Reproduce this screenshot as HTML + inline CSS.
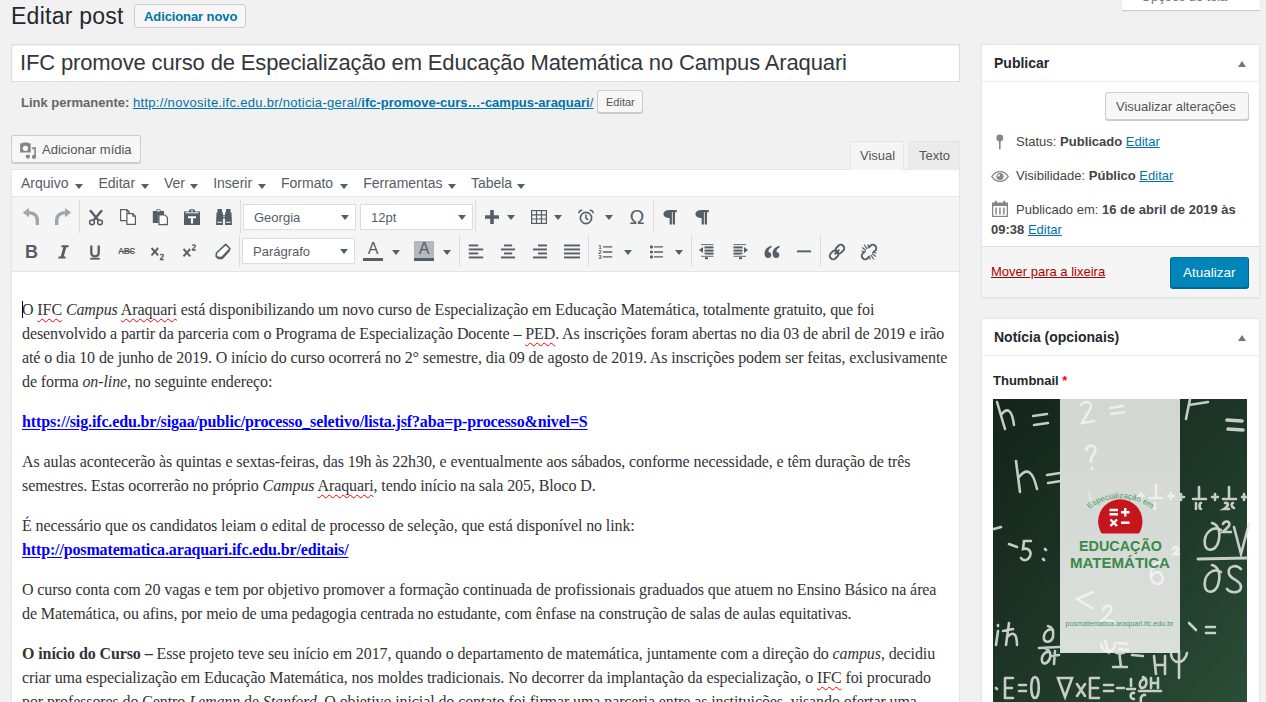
<!DOCTYPE html>
<html><head><meta charset="utf-8">
<style>
*{box-sizing:border-box;margin:0;padding:0}
html,body{width:1266px;height:702px;overflow:hidden;background:#f1f1f1;font-family:"Liberation Sans",sans-serif;color:#444;font-size:13px;position:relative}
.abs{position:absolute}
.ic{position:absolute;overflow:visible}
.sep{position:absolute;width:1px;background:#dcdcdc}
.glyph{position:absolute;color:#555d66;text-align:center}
.btn{position:absolute;background:#f7f7f7;border:1px solid #ccc;border-radius:3px;box-shadow:0 1px 0 #ccc;color:#555;white-space:nowrap}
#h1{left:11px;top:0px;font-size:23px;line-height:32px;color:#23282d;letter-spacing:0.25px}
#addnew{left:134px;top:4px;width:112px;height:24px;color:#0073aa;font-weight:bold;font-size:13px;line-height:24px;padding-left:9px;box-shadow:none;letter-spacing:-0.1px}
#title{left:11px;top:44px;width:949px;height:38px;background:#fff;border:1px solid #ddd;box-shadow:inset 0 1px 2px rgba(0,0,0,.07)}
#title span{position:absolute;left:8px;top:5px;font-size:22px;line-height:26px;color:#32373c;white-space:nowrap;letter-spacing:-0.14px}
#perma{left:21px;top:94px;font-size:13px;line-height:18px;white-space:nowrap;color:#666}
#perma b{color:#666}
#perma a{color:#0073aa;text-decoration:underline;letter-spacing:0.3px}
#perma a b{letter-spacing:0}
#editbtn{left:597px;top:90px;width:46px;height:23px;font-size:11px;line-height:23px;padding-left:8px;color:#555}
#media{left:11px;top:135px;width:130px;height:28px;font-size:13px;line-height:28px;padding-left:30px}
.tab{position:absolute;top:141px;height:29px;font-size:13px;line-height:28px;color:#555;border:1px solid #e5e5e5;border-bottom:none;padding-left:9px}
#visual{left:850px;width:54px;background:#f5f5f5}
#texto{left:909px;width:51px;background:#ebebeb}
#editor{left:11px;top:169px;width:949px;height:540px;border:1px solid #e5e5e5;background:#fff}
#menubar{position:absolute;left:0;top:0;width:947px;height:27px;background:#fff;border-bottom:1px solid #e5e5e5}
#toolbar{position:absolute;left:0;top:27px;width:947px;height:75px;background:#f5f5f5;border-bottom:1px solid #e5e5e5}
.mlabel{position:absolute;top:173px;font-size:14px;line-height:20px;color:#555d66;white-space:nowrap}
.lbox{position:absolute;background:#fff;border:1px solid #ddd;font-size:13px;color:#555d66}
.lbox span{position:absolute;top:5px;line-height:16px}
#content{position:absolute;left:10px;top:128px;font-family:"Liberation Serif",serif;font-size:16px;line-height:24px;color:#333;white-space:nowrap;letter-spacing:-0.1px}
#content p{margin-bottom:16px}
#content s{text-decoration:underline wavy #f00;text-decoration-skip-ink:none;text-underline-offset:3px;text-decoration-thickness:1px}
#content a{color:#00f;font-weight:bold;text-decoration:underline;letter-spacing:-0.14px;text-underline-offset:2px}
.box{position:absolute;left:981px;width:279px;background:#fff;border:1px solid #e5e5e5;box-shadow:0 1px 1px rgba(0,0,0,.04)}
.box h2{position:absolute;left:0;top:0;width:277px;height:37px;border-bottom:1px solid #eee;font-size:14px;font-weight:bold;color:#23282d;line-height:36px;padding-left:12px}
.tri{position:absolute;width:0;height:0;border-left:4px solid transparent;border-right:4px solid transparent;border-bottom:6px solid #72777c}
.meta{position:absolute;left:1016px;font-size:13px;line-height:20px;color:#444;white-space:nowrap}
.meta b{color:#444}
.meta a{color:#0073aa;text-decoration:underline}
</style></head><body>
<div class="abs" id="h1">Editar post</div>
<div class="btn" id="addnew">Adicionar novo</div>
<div class="abs" style="left:1122px;top:-20px;width:138px;height:30px;background:#fff;box-shadow:0 1px 1px rgba(0,0,0,.15);"></div><div class="abs" style="left:1141px;top:-11px;font-size:13px;line-height:16px;color:#72777c;white-space:nowrap;letter-spacing:-0.1px">Opções de tela</div>

<div class="abs" id="title"><span>IFC promove curso de Especialização em Educação Matemática no Campus Araquari</span></div>
<div class="abs" id="perma"><b>Link permanente:</b> <a>http://novosite.ifc.edu.br/noticia-geral/<b style="color:#0073aa">ifc-promove-curs…-campus-araquari</b>/</a></div>
<div class="btn" id="editbtn">Editar</div>

<div class="btn" id="media">Adicionar mídia</div>
<svg class="ic" style="left:14px;top:138px" width="30" height="25" viewBox="0 0 30 25"><path d="M6.1 5.2H8.4L9 4.6H13.8L14.4 5.2H16.7V14.6H6.1Z" fill="#82878c"/><circle cx="11.4" cy="10.3" r="2.6" fill="#fff"/><path d="M18.2 9.3H21.9V19H20.3V11.3H18.2Z" fill="#82878c"/><circle cx="13.9" cy="18.6" r="2.1" fill="#82878c"/><circle cx="20" cy="18.9" r="2.1" fill="#82878c"/></svg>

<div class="abs" id="editor">
 <div id="menubar"></div>
 <div id="toolbar"></div>
 <div id="content">
  <p>O <s>IFC</s> <i>Campus</i> <s>Araquari</s> está disponibilizando um novo curso de Especialização em Educação Matemática, totalmente gratuito, que foi<br>desenvolvido a partir da parceria com o Programa de Especialização Docente – <s>PED</s>. As inscrições foram abertas no dia 03 de abril de 2019 e irão<br>até o dia 10 de junho de 2019. O início do curso ocorrerá no 2° semestre, dia 09 de agosto de 2019. As inscrições podem ser feitas, exclusivamente<br>de forma <i>on-line</i>, no seguinte endereço:</p>
  <p><a>https://sig.ifc.edu.br/sigaa/public/processo_seletivo/lista.jsf?aba=p-processo&amp;nivel=S</a></p>
  <p>As aulas acontecerão às quintas e sextas-feiras, das 19h às 22h30, e eventualmente aos sábados, conforme necessidade, e têm duração de três<br>semestres. Estas ocorrerão no próprio <i>Campus</i> <s>Araquari</s>, tendo início na sala 205, Bloco D.</p>
  <p>É necessário que os candidatos leiam o edital de processo de seleção, que está disponível no link:<br><a>http://posmatematica.araquari.ifc.edu.br/editais/</a></p>
  <p>O curso conta com 20 vagas e tem por objetivo promover a formação continuada de profissionais graduados que atuem no Ensino Básico na área<br>de Matemática, ou afins, por meio de uma pedagogia centrada no estudante, com ênfase na construção de salas de aulas equitativas.</p>
  <p><b>O início do Curso –</b> Esse projeto teve seu início em 2017, quando o departamento de matemática, juntamente com a direção do <i>campus</i>, decidiu<br>criar uma especialização em Educação Matemática, nos moldes tradicionais. No decorrer da implantação da especialização, o <s>IFC</s> foi procurado<br>por professores do Centro <i>Lemann</i> de <i>Stanford</i>. O objetivo inicial do contato foi firmar uma parceria entre as instituições, visando ofertar uma</p>
 </div>
</div>
<div class="tab" id="visual" style="height:29px">Visual</div>
<div class="tab" id="texto">Texto</div>
<div class="mlabel" style="left:21px">Arquivo</div><svg class="ic" style="left:75px;top:183.5px" width="8" height="5" viewBox="0 0 8 5"><path d="M0 0H8L4 5Z" fill="#555d66"/></svg><div class="mlabel" style="left:98.5px">Editar</div><svg class="ic" style="left:140.8px;top:183.5px" width="8" height="5" viewBox="0 0 8 5"><path d="M0 0H8L4 5Z" fill="#555d66"/></svg><div class="mlabel" style="left:164px">Ver</div><svg class="ic" style="left:190.2px;top:183.5px" width="8" height="5" viewBox="0 0 8 5"><path d="M0 0H8L4 5Z" fill="#555d66"/></svg><div class="mlabel" style="left:213.2px">Inserir</div><svg class="ic" style="left:257.9px;top:183.5px" width="8" height="5" viewBox="0 0 8 5"><path d="M0 0H8L4 5Z" fill="#555d66"/></svg><div class="mlabel" style="left:281px">Formato</div><svg class="ic" style="left:340.2px;top:183.5px" width="8" height="5" viewBox="0 0 8 5"><path d="M0 0H8L4 5Z" fill="#555d66"/></svg><div class="mlabel" style="left:363.2px">Ferramentas</div><svg class="ic" style="left:447.8px;top:183.5px" width="8" height="5" viewBox="0 0 8 5"><path d="M0 0H8L4 5Z" fill="#555d66"/></svg><div class="mlabel" style="left:470.9px">Tabela</div><svg class="ic" style="left:517.2px;top:183.5px" width="8" height="5" viewBox="0 0 8 5"><path d="M0 0H8L4 5Z" fill="#555d66"/></svg>
<div class="abs" style="left:22px;top:301px;width:1px;height:17px;background:#000"></div>
<svg class="ic" style="left:21.0px;top:207.0px" width="20" height="20" viewBox="0 0 20 20" ><path d="M1.8 5.6L8 0.9V10.3Z" fill="#a0a5aa"/><path d="M7 5.6C12.5 5.6 16.3 8.5 16.3 13.5V18" stroke="#a0a5aa" stroke-width="3.4" fill="none"/></svg>
<svg class="ic" style="left:53.0px;top:207.0px" width="20" height="20" viewBox="0 0 20 20" ><g transform="translate(20,0) scale(-1,1)"><path d="M1.8 5.6L8 0.9V10.3Z" fill="#a0a5aa"/><path d="M7 5.6C12.5 5.6 16.3 8.5 16.3 13.5V18" stroke="#a0a5aa" stroke-width="3.4" fill="none"/></g></svg>
<div class="sep" style="left:79px;top:200px;height:33px"></div>
<svg class="ic" style="left:86.0px;top:207.0px" width="20" height="20" viewBox="0 0 20 20" ><path d="M4 3.2L12.4 13.2M16 3.2L7.6 13.2" stroke="#555d66" stroke-width="2.4" stroke-linecap="butt"/><circle cx="6" cy="15.3" r="2.4" stroke="#555d66" stroke-width="1.5" fill="none"/><circle cx="14" cy="15.3" r="2.4" stroke="#555d66" stroke-width="1.5" fill="none"/></svg>
<svg class="ic" style="left:118.0px;top:207.0px" width="20" height="20" viewBox="0 0 20 20" ><path d="M2.6 2.6H8.8L11.2 5V13.6H2.6Z" stroke="#555d66" stroke-width="1.2" fill="#fff"/><path d="M8.8 2.6V5H11.2" stroke="#555d66" stroke-width="1.2" fill="none"/><path d="M8.9 6.6H14.8L17.4 9.2V17.4H8.9Z" stroke="#555d66" stroke-width="1.2" fill="#fff"/><path d="M14.8 6.6V9.2H17.4" stroke="#555d66" stroke-width="1.2" fill="none"/></svg>
<svg class="ic" style="left:150.0px;top:207.0px" width="20" height="20" viewBox="0 0 20 20" ><path d="M2.8 4H6.5V2.2H10.5V4H14V8H8.5V16H2.8Z" fill="#555d66"/><path d="M7.3 3H9.7V4.5H7.3Z" fill="#fff"/><path d="M9 8H15L17.4 10.4V17.6H9Z" stroke="#555d66" stroke-width="1.2" fill="#fff"/><path d="M15 16.5V17.6" stroke="#555d66" stroke-width="1"/></svg>
<svg class="ic" style="left:182.0px;top:207.0px" width="20" height="20" viewBox="0 0 20 20" ><path d="M2 4.5H6.5C7.5 2.5 8.5 2 10 2S12.5 2.5 13.5 4.5H18V18H2Z" fill="#555d66"/><circle cx="10" cy="3.6" r="0.9" fill="#fff"/><path d="M3.5 5.8H16.5" stroke="#fff" stroke-width="1"/><path d="M6 9.3H14V11.3H11.1V16.5H8.9V11.3H6Z" fill="#fff"/></svg>
<svg class="ic" style="left:214.0px;top:207.0px" width="20" height="20" viewBox="0 0 20 20" ><path d="M3.5 2H8V5.5H9V8H11V5.5H12V2H16.5V5.5H17.5L18 18H11V11.5H9V18H2L2.5 5.5H3.5Z" fill="#555d66"/><path d="M3.8 15.3H7.6M12.4 15.3H16.2" stroke="#fff" stroke-width="1.1" stroke-linecap="round"/><path d="M9 9.3H11" stroke="#fff" stroke-width="0.8"/></svg>
<div class="sep" style="left:240px;top:200px;height:33px"></div>
<div class="lbox" style="left:243px;top:204px;width:113px;height:26px"><span style="left:10px">Georgia</span></div><svg class="ic" style="left:341.3px;top:215.0px" width="8" height="5" viewBox="0 0 8 5"><path d="M0 0H8L4 5Z" fill="#555d66"/></svg><div class="lbox" style="left:360px;top:204px;width:113px;height:26px"><span style="left:10px">12pt</span></div><svg class="ic" style="left:458px;top:215.0px" width="8" height="5" viewBox="0 0 8 5"><path d="M0 0H8L4 5Z" fill="#555d66"/></svg><div class="lbox" style="left:242px;top:238px;width:113px;height:26px"><span style="left:10px">Parágrafo</span></div><svg class="ic" style="left:340.3px;top:249.0px" width="8" height="5" viewBox="0 0 8 5"><path d="M0 0H8L4 5Z" fill="#555d66"/></svg>
<div class="sep" style="left:475px;top:200px;height:33px"></div>
<svg class="ic" style="left:482.0px;top:207.0px" width="20" height="20" viewBox="0 0 20 20" ><path d="M8.2 3H11.8V8.2H17V11.8H11.8V17H8.2V11.8H3V8.2H8.2Z" fill="#555d66"/></svg>
<svg class="ic" style="left:507px;top:215.0px" width="8" height="5" viewBox="0 0 8 5"><path d="M0 0H8L4 5Z" fill="#555d66"/></svg>
<svg class="ic" style="left:529.0px;top:207.0px" width="20" height="20" viewBox="0 0 20 20" ><rect x="2.6" y="3.6" width="14.8" height="12.8" stroke="#555d66" stroke-width="1.2" fill="none"/><path d="M2.6 7.8H17.4M2.6 12H17.4M7.5 3.6V16.4M12.5 3.6V16.4" stroke="#555d66" stroke-width="1.2"/></svg>
<svg class="ic" style="left:554px;top:215.0px" width="8" height="5" viewBox="0 0 8 5"><path d="M0 0H8L4 5Z" fill="#555d66"/></svg>
<svg class="ic" style="left:576.0px;top:207.0px" width="20" height="20" viewBox="0 0 20 20" ><circle cx="10" cy="11" r="5.6" stroke="#555d66" stroke-width="1.6" fill="none"/><path d="M10 7.5V11.3L12.5 13" stroke="#555d66" stroke-width="1.5" fill="none"/><path d="M2.8 6.3C3 4 4.5 3 6.3 3.2M17.2 6.3C17 4 15.5 3 13.7 3.2" stroke="#555d66" stroke-width="1.5" fill="none"/></svg>
<svg class="ic" style="left:605px;top:215.0px" width="8" height="5" viewBox="0 0 8 5"><path d="M0 0H8L4 5Z" fill="#555d66"/></svg>
<div class="glyph" style="left:627px;top:205px;width:20px;font:20px/24px 'Liberation Sans',sans-serif;">Ω</div>
<div class="sep" style="left:653px;top:200px;height:33px"></div>
<svg class="ic" style="left:659.5px;top:207.0px" width="20" height="20" viewBox="0 0 20 20" ><path d="M10.5 3H16.8V5.2H15V17.5H12.7V5.2H11.9V17.5H9.6V11C6 11 3.5 9.5 3.5 7S6 3 10.5 3Z" fill="#555d66"/></svg>
<svg class="ic" style="left:692.0px;top:207.0px" width="20" height="20" viewBox="0 0 20 20" ><path d="M10.5 3H16.8V5.2H15V17.5H12.7V5.2H11.9V17.5H9.6V11C6 11 3.5 9.5 3.5 7S6 3 10.5 3Z" fill="#555d66"/></svg>
<div class="glyph" style="left:25px;top:241px;width:13px;font:bold 18px/22px 'Liberation Sans',sans-serif;">B</div>
<svg class="ic" style="left:53.0px;top:241.5px" width="20" height="20" viewBox="0 0 20 20" ><path d="M8.6 3.2H15.8L15.4 5.2H13.3L10.7 14.6H12.8L12.4 16.6H5.2L5.6 14.6H7.7L10.3 5.2H8.2Z" fill="#555d66"/></svg>
<svg class="ic" style="left:84.5px;top:241.5px" width="20" height="20" viewBox="0 0 20 20" ><path d="M6.3 3.5V10.3C6.3 13 7.6 14.3 10 14.3S13.7 13 13.7 10.3V3.5" stroke="#555d66" stroke-width="2.3" fill="none"/><path d="M5.2 16.7H14.8" stroke="#555d66" stroke-width="1.8"/></svg>
<div class="glyph" style="left:117px;top:244px;width:19px;font:bold 8.5px/14px 'Liberation Sans',sans-serif;letter-spacing:-0.4px">ABC</div><div class="ic" style="left:119px;top:250.6px;width:15px;height:1px;background:#555d66"></div>
<svg class="ic" style="left:148.3px;top:241.5px" width="20" height="20" viewBox="0 0 20 20" ><path d="M3.5 6L10.2 13.3M10.2 6L3.5 13.3" stroke="#555d66" stroke-width="1.9"/><path d="M12.4 13.2C12.8 12 15.4 12 15.4 13.6C15.4 14.8 12.5 15.8 12.4 17.5H15.8" stroke="#555d66" stroke-width="1.3" fill="none"/></svg>
<svg class="ic" style="left:180.3px;top:241.5px" width="20" height="20" viewBox="0 0 20 20" ><path d="M3.5 7L10.2 14.3M10.2 7L3.5 14.3" stroke="#555d66" stroke-width="1.9"/><path d="M12.4 3.7C12.8 2.5 15.4 2.5 15.4 4.1C15.4 5.3 12.5 6.3 12.4 8H15.8" stroke="#555d66" stroke-width="1.3" fill="none"/></svg>
<svg class="ic" style="left:212.5px;top:241.5px" width="20" height="20" viewBox="0 0 20 20" ><path d="M12.7 2.4L17 6.7L9 15.3L4.2 15.5L3.2 14.2L3.5 11Z" stroke="#555d66" stroke-width="1.6" fill="#fff" stroke-linejoin="round"/><path d="M3.2 14.2L9 15.3L17 6.7V9L9.5 17.3L5 17.2Z" fill="#555d66"/></svg>
<div class="sep" style="left:239px;top:235px;height:32px"></div>
<div class="glyph" style="left:363px;top:239px;width:20px;text-align:center;font:16px/20px 'Liberation Sans',sans-serif;">A</div><div class="ic" style="left:363px;top:258px;width:20px;height:2.5px;background:#555d66"></div>
<svg class="ic" style="left:392px;top:249.5px" width="8" height="5" viewBox="0 0 8 5"><path d="M0 0H8L4 5Z" fill="#555d66"/></svg>
<div class="ic" style="left:414px;top:241px;width:20px;height:17px;background:#b4b9be"></div><div class="glyph" style="left:414px;top:239px;width:20px;text-align:center;font:16px/20px 'Liberation Sans',sans-serif;">A</div><div class="ic" style="left:414px;top:258px;width:20px;height:2.5px;background:#555d66"></div>
<svg class="ic" style="left:443px;top:249.5px" width="8" height="5" viewBox="0 0 8 5"><path d="M0 0H8L4 5Z" fill="#555d66"/></svg>
<div class="sep" style="left:459px;top:235px;height:32px"></div>
<svg class="ic" style="left:466.0px;top:241.5px" width="20" height="20" viewBox="0 0 20 20" ><rect x="2.8" y="2.5" width="9.399999999999999" height="1.9" fill="#555d66"/><rect x="2.8" y="6.5" width="14.399999999999999" height="1.9" fill="#555d66"/><rect x="2.8" y="10.5" width="9.399999999999999" height="1.9" fill="#555d66"/><rect x="2.8" y="14.5" width="14.399999999999999" height="1.9" fill="#555d66"/></svg>
<svg class="ic" style="left:498.0px;top:241.5px" width="20" height="20" viewBox="0 0 20 20" ><rect x="6" y="2.5" width="8.2" height="1.9" fill="#555d66"/><rect x="2.9" y="6.5" width="14.1" height="1.9" fill="#555d66"/><rect x="6" y="10.5" width="8.2" height="1.9" fill="#555d66"/><rect x="2.9" y="14.5" width="14.1" height="1.9" fill="#555d66"/></svg>
<svg class="ic" style="left:530.0px;top:241.5px" width="20" height="20" viewBox="0 0 20 20" ><rect x="8" y="2.5" width="9" height="1.9" fill="#555d66"/><rect x="3" y="6.5" width="14" height="1.9" fill="#555d66"/><rect x="8" y="10.5" width="9" height="1.9" fill="#555d66"/><rect x="3" y="14.5" width="14" height="1.9" fill="#555d66"/></svg>
<svg class="ic" style="left:562.0px;top:241.5px" width="20" height="20" viewBox="0 0 20 20" ><rect x="2" y="2.5" width="16" height="1.9" fill="#555d66"/><rect x="2" y="6.5" width="16" height="1.9" fill="#555d66"/><rect x="2" y="10.5" width="16" height="1.9" fill="#555d66"/><rect x="2" y="14.5" width="16" height="1.9" fill="#555d66"/></svg>
<div class="sep" style="left:588px;top:235px;height:32px"></div>
<svg class="ic" style="left:595.0px;top:241.5px" width="20" height="20" viewBox="0 0 20 20" ><path d="M8 4.9H17.2M8 10H17.2M8 14.9H17.2" stroke="#555d66" stroke-width="1.3"/><text x="3.2" y="7.2" font-family="Liberation Sans" font-weight="bold" font-size="6.2" fill="#555d66">1</text><text x="3.2" y="12.3" font-family="Liberation Sans" font-weight="bold" font-size="6.2" fill="#555d66">2</text><text x="3.2" y="17.3" font-family="Liberation Sans" font-weight="bold" font-size="6.2" fill="#555d66">3</text></svg>
<svg class="ic" style="left:624px;top:249.5px" width="8" height="5" viewBox="0 0 8 5"><path d="M0 0H8L4 5Z" fill="#555d66"/></svg>
<svg class="ic" style="left:646.0px;top:241.5px" width="20" height="20" viewBox="0 0 20 20" ><path d="M8 4.9H17M8 10H17M8 14.9H17" stroke="#555d66" stroke-width="1.3"/><circle cx="5.5" cy="4.9" r="1.6" fill="#555d66"/><circle cx="5.5" cy="10" r="1.6" fill="#555d66"/><circle cx="5.5" cy="14.9" r="1.6" fill="#555d66"/></svg>
<svg class="ic" style="left:675px;top:249.5px" width="8" height="5" viewBox="0 0 8 5"><path d="M0 0H8L4 5Z" fill="#555d66"/></svg>
<div class="sep" style="left:691px;top:235px;height:32px"></div>
<svg class="ic" style="left:697.0px;top:241.5px" width="20" height="20" viewBox="0 0 20 20" ><path d="M4 2.6H16.5M9 12H16.5M4 14.3H16.5" stroke="#555d66" stroke-width="0.9"/><rect x="7.5" y="4.4" width="9" height="2" fill="#555d66"/><rect x="7.5" y="7.6" width="9" height="2" fill="#555d66"/><rect x="7.5" y="10.6" width="9" height="1.6" fill="#555d66"/><path d="M2 8L6 5V11Z" fill="#555d66"/><rect x="8" y="15.2" width="3" height="2" fill="#555d66"/></svg>
<svg class="ic" style="left:730.0px;top:241.5px" width="20" height="20" viewBox="0 0 20 20" ><path d="M3.5 2.6H16M3.5 12H11M3.5 14.3H16" stroke="#555d66" stroke-width="0.9"/><rect x="3.5" y="4.4" width="9" height="2" fill="#555d66"/><rect x="3.5" y="7.6" width="9" height="2" fill="#555d66"/><rect x="3.5" y="10.6" width="9" height="1.6" fill="#555d66"/><path d="M18 8L14 5V11Z" fill="#555d66"/><rect x="9" y="15.2" width="3" height="2" fill="#555d66"/></svg>
<svg class="ic" style="left:762.0px;top:241.5px" width="20" height="20" viewBox="0 0 20 20" ><path d="M9.2 3.8C5.2 5 2.6 7.6 2.6 11.6C2.6 14.3 4 16 6.1 16C8 16 9.3 14.7 9.3 12.9C9.3 11.1 8.1 9.9 6.4 9.9C6.5 7.6 7.6 6.1 9.8 5.2Z M17.2 3.8C13.2 5 10.6 7.6 10.6 11.6C10.6 14.3 12 16 14.1 16C16 16 17.3 14.7 17.3 12.9C17.3 11.1 16.1 9.9 14.4 9.9C14.5 7.6 15.6 6.1 17.8 5.2Z" fill="#555d66"/></svg>
<svg class="ic" style="left:794.0px;top:241.5px" width="20" height="20" viewBox="0 0 20 20" ><rect x="3" y="8.4" width="14" height="1.9" fill="#555d66"/></svg>
<div class="sep" style="left:820px;top:235px;height:32px"></div>
<svg class="ic" style="left:827.0px;top:241.5px" width="20" height="20" viewBox="0 0 20 20" ><g transform="rotate(-45 10 10)"><rect x="1.2" y="6.6" width="9.6" height="6.8" rx="3.4" stroke="#555d66" stroke-width="1.9" fill="none"/><rect x="9.2" y="6.6" width="9.6" height="6.8" rx="3.4" stroke="#555d66" stroke-width="1.9" fill="none"/></g><path d="M7.6 12.4L12.4 7.6" stroke="#555d66" stroke-width="1.9"/></svg>
<svg class="ic" style="left:859.0px;top:241.5px" width="20" height="20" viewBox="0 0 20 20" ><g transform="rotate(-45 10 10)"><path d="M7 6.6H4.6A3.4 3.4 0 0 0 4.6 13.4H7M13 6.6H15.4A3.4 3.4 0 0 1 15.4 13.4H13" stroke="#555d66" stroke-width="1.9" fill="none"/></g><path d="M3 5.5L7 8.2M5.2 2.5L8 7M9 2.2L9.2 6.5M17 14.5L13 11.8M14.8 17.5L12 13M11 17.8L10.8 13.5M2.5 9L7 9.5M17.5 11L13 10.5" stroke="#555d66" stroke-width="1.1"/></svg>

<div class="box" id="pub" style="top:44px;height:254px">
 <h2>Publicar</h2>
 <div class="tri" style="left:256px;top:16px"></div>
 <div class="btn" style="left:123px;top:47px;width:144px;height:28px;font-size:13px;line-height:28px;padding-left:10px">Visualizar alterações</div>
 <div style="position:absolute;left:0;top:201px;width:277px;height:51px;background:#f5f5f5;border-top:1px solid #ddd"></div>
 <div style="position:absolute;left:9px;top:218px;font-size:13px;line-height:18px;color:#a00;text-decoration:underline;white-space:nowrap">Mover para a lixeira</div>
 <div style="position:absolute;left:188px;top:212px;width:79px;height:31px;background:#0085ba;border:1px solid #006799;border-top-color:#0073aa;border-radius:3px;box-shadow:0 1px 0 #006799;color:#fff;font-size:13.5px;line-height:30px;padding-left:12px;white-space:nowrap">Atualizar</div>
</div>
<svg class="ic" style="left:991px;top:132px" width="18" height="20" viewBox="0 0 18 20"><circle cx="8.8" cy="6" r="3.4" fill="#82878c"/><path d="M8 8.5H9.6V17L8.8 17.6L8 17Z" fill="#82878c"/></svg>
<div class="meta" style="top:132px">Status: <b>Publicado</b> <a>Editar</a></div>
<svg class="ic" style="left:990px;top:168px" width="20" height="18" viewBox="0 0 20 18"><path d="M1 8.5C3.5 4.5 6.5 3 10 3S16.5 4.5 19 8.5C16.5 12.5 13.5 14 10 14S3.5 12.5 1 8.5Z" fill="#82878c"/><path d="M2.6 8.5C4.8 5.4 7.2 4.3 10 4.3S15.2 5.4 17.4 8.5C15.2 11.6 12.8 12.7 10 12.7S4.8 11.6 2.6 8.5Z" fill="#fff"/><circle cx="10" cy="8.5" r="3.6" fill="#82878c"/><circle cx="8.8" cy="7.4" r="1.1" fill="#fff"/></svg>
<div class="meta" style="top:166px">Visibilidade: <b>Público</b> <a>Editar</a></div>
<svg class="ic" style="left:991px;top:200px" width="18" height="18" viewBox="0 0 18 18"><path d="M1 2.5H17V17H1Z" fill="#82878c"/><rect x="2.3" y="6" width="13.4" height="9.8" fill="#fff"/><rect x="4.3" y="7.5" width="1.5" height="7" fill="#82878c"/><rect x="8.2" y="7.5" width="1.5" height="7" fill="#82878c"/><rect x="12.1" y="7.5" width="1.5" height="7" fill="#82878c"/><rect x="3.8" y="0.8" width="2" height="3.5" fill="#82878c"/><rect x="12.2" y="0.8" width="2" height="3.5" fill="#82878c"/></svg>
<div class="meta" style="top:200px">Publicado em: <b>16 de abril de 2019 às</b></div>
<div class="meta" style="top:220px;left:991px"><b>09:38</b> <a>Editar</a></div>

<div class="box" id="not" style="top:318px;height:400px">
 <h2>Notícia (opcionais)</h2>
 <div class="tri" style="left:256px;top:16px"></div>
 <div style="position:absolute;left:11px;top:53px;font-size:13px;font-weight:bold;color:#23282d;line-height:18px;white-space:nowrap">Thumbnail <span style="color:#f00">*</span></div>
</div>
<svg class="ic" style="left:993px;top:399px" width="254" height="303" viewBox="0 0 254 303">
<defs>
<linearGradient id="gb" x1="0" y1="0" x2="1" y2="1"><stop offset="0" stop-color="#14241a"/><stop offset="0.45" stop-color="#1c3325"/><stop offset="1" stop-color="#2b4d37"/></linearGradient>
<linearGradient id="gp" x1="0" y1="0" x2="0" y2="1"><stop offset="0" stop-color="#d3d7d4"/><stop offset="1" stop-color="#dadfdc"/></linearGradient>
<clipPath id="cc"><rect x="90" y="90" width="80" height="44.5"/></clipPath>
<path id="arc" d="M93 113 A50 50 0 0 1 162 113"/>
</defs>
<rect width="254" height="303" fill="url(#gb)"/>
<g fill="none" stroke="#e4e8e4" stroke-width="2.6" stroke-linecap="round" opacity="0.85">
 <!-- h = top-left -->
 <path d="M4 3 L12 30 M8 16 C14 8 19 10 21 26"/>
 <path d="M40 17 L54 15 M41 26 L55 24"/>
 <!-- h = second -->
 <path d="M23 62 L27 93 M26 78 C34 68 40 72 44 90"/>
 <path d="M54 76 L67 74 M55 84 L68 82"/>
 <!-- -5: -->
 <path d="M1 130 L8 128 M16 145 L24 148 M38 142 L31 142 L30 150 C37 148 40 155 35 160 C32 162 29 161 28 159 M52 150 L53 151 M50 160 L51 161"/>
 <!-- ih -->
 <path d="M5 232 L3 246 M5 226 L5 227 M16 224 L13 246 M10 232 L20 230 M14 238 C20 232 24 234 24 246"/>
 <!-- d/dt -->
 <path d="M60 231 C56 229 50 233 51 240 C52 244 58 244 60 238 C61 232 59 228 55 227 M46 249 L66 248 M56 253 C52 252 48 257 49 262 C50 266 55 265 57 259 C58 255 57 251 53 250 M62 252 L61 265 M58 257 L66 256"/>
 <!-- bottom line -->
 <path d="M3 289 L4 290 M12 279 L12 299 L20 299 M12 279 L20 279 M12 289 L19 289 M26 286 L33 286 M26 292 L33 292 M42 278 C37 278 37 299 42 299 C47 299 47 278 42 278"/>
 <path d="M65 279 L79 279 L72 298 Z M84 285 L92 297 M92 285 L84 297 M97 279 L97 299 L106 299 M97 279 L106 279 M97 289 L105 289 M111 286 L120 286 M111 292 L120 292 M124 289 L131 289 M138 280 L138 287 M134 290 L142 290 M141 294 C137 293 136 300 141 300 M152 280 C149 280 146 283 147 287 C148 290 152 289 153 286 C154 282 153 279 150 278 M158 279 L158 289 M165 279 L165 289 M158 284 L165 284 M146 292 L168 292 M152 296 C149 295 147 299 148 303"/>
 <!-- right: F, =, fractions -->
 <path d="M193 20 L197 0 M196 6 L215 3"/>
 <path d="M234 21 L249 22 M235 30 L250 31" stroke-width="3.6"/>
 <path d="M185 98 L191 98 M188 95 L188 101 M206 88 L206 98 M200 100 L213 100 M203 104 L203 110 M208 104 C206 104 206 110 208 110 M219 98 L225 98 M222 95 L222 101 M236 88 L236 98 M230 100 L243 100 M232 104 C236 103 236 107 231 110 L236 110 M240 104 C238 104 238 108 241 109 M249 98 L254 98 M251 95 L251 101"/>
 <!-- d2V / dS2 -->
 <path d="M228 131 C220 126 210 134 212 146 C214 153 222 152 225 144 C228 134 226 126 219 124 M230 125 C232 121 238 122 236 127 L230 133 L238 133 M241 128 L248 155 L256 125"/>
 <path d="M205 160 L254 159" stroke-width="3"/>
 <path d="M228 173 C220 168 210 176 212 188 C214 195 222 194 225 186 C228 176 226 168 219 166 M248 170 C243 165 234 167 236 175 C238 181 248 181 248 188 C248 194 238 195 234 190"/>
 <!-- = on right lower -->
 <path d="M213 228 L222 228 M213 234 L222 234 M196 224 L203 231"/>
 <!-- Psi H Psi -->
 <path d="M125 243 L128 268 M118 245 C118 258 136 258 137 244 M120 268 L134 268 M138 250 L149 251 M139 256 L150 257 M161 257 L163 275 M172 257 L172 275 M162 266 L172 266 M162 251 L168 247 L172 251 M178 254 C178 266 192 266 194 254 M186 252 L186 279"/>
 <path d="M83 244 L108 246"/>
</g>
<rect x="67" y="0" width="120" height="254" fill="url(#gp)"/>
<g fill="none" stroke="#ffffff" stroke-width="2.6" stroke-linecap="round" opacity="0.6">
 <path d="M88 6 C94 0 102 4 96 12 L89 24 L101 22"/>
 <path d="M117 9 L130 7 M118 15 L131 13"/>
 <path d="M93 51 C96 44 104 46 102 53 C100 57 97 58 98 63 M99 69 L99 70"/>
 <path d="M96 92 L98 104" opacity="0.4"/>
 <path d="M145 97 L151 97 M148 94 L148 100 M163 86 L163 97 M157 99 L169 99 M162 104 L162 110 M175 97 L181 97 M178 94 L178 100"/>
 <path d="M100 193 L84 200 L99 209 M110 211 C112 205 120 205 118 212 L109 222 L120 222"/>
 <path d="M172 164 C160 160 154 175 160 183 C166 188 173 182 168 175 C165 171 159 174 158 178 M180 150 C182 147 186 148 185 151 L181 155 L186 155"/>
 <path d="M112 242 L116 254 M108 245 C109 255 122 255 122 244 M125 244 L134 245 M126 250 L135 251"/>
</g>
<g clip-path="url(#cc)"><circle cx="127.3" cy="122.5" r="22.2" fill="#c4161c"/></g>
<path d="M116.5 111H125M116.5 115.3H125M128 113.2H136.5M132.25 108.9V117.5" stroke="#fff" stroke-width="2.4"/>
<path d="M117.5 120.5L124 127M124 120.5L117.5 127M128 123.8H136.5" stroke="#fff" stroke-width="2.4"/>
<text font-family="Liberation Sans" font-size="8" fill="#4c9a5c"><textPath href="#arc" startOffset="50%" text-anchor="middle">Especialização em</textPath></text>
<text x="127.5" y="151.5" font-family="Liberation Sans" font-weight="bold" font-size="14.6" fill="#3a8a4a" text-anchor="middle" textLength="83" lengthAdjust="spacingAndGlyphs">EDUCAÇÃO</text>
<text x="127" y="168.5" font-family="Liberation Sans" font-weight="bold" font-size="14.6" fill="#3a8a4a" text-anchor="middle" textLength="100" lengthAdjust="spacingAndGlyphs">MATEMÁTICA</text>
<text x="126.5" y="227" font-family="Liberation Sans" font-size="7.5" fill="#4a9a6a" text-anchor="middle" textLength="108" lengthAdjust="spacingAndGlyphs">posmatematica.araquari.ifc.edu.br</text>
</svg>

</body></html>
